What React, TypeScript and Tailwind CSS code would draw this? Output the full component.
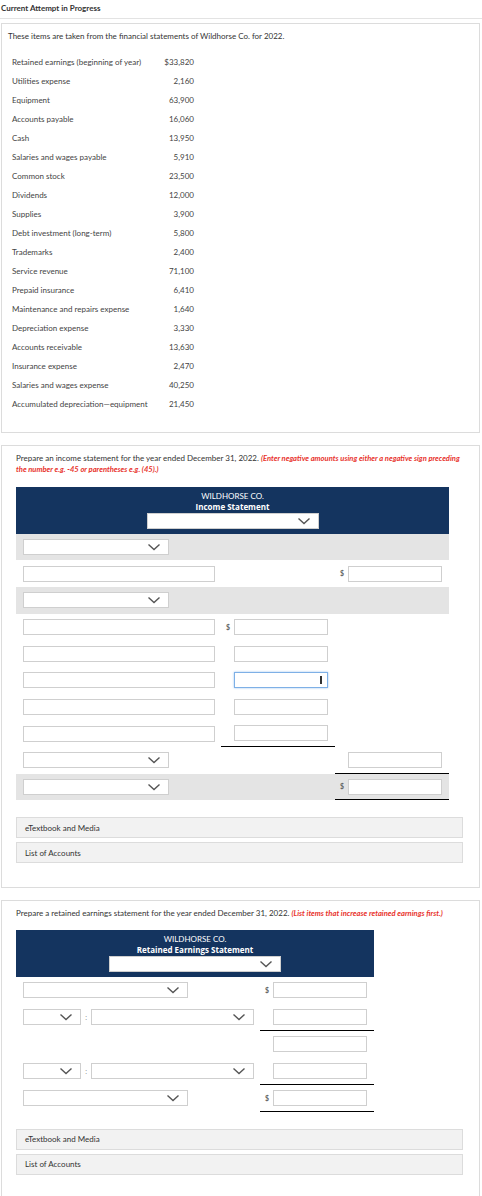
import React from "react";

const items: [string, string][] = [
  ["Retained earnings (beginning of year)", "$33,820"],
  ["Utilities expense", "2,160"],
  ["Equipment", "63,900"],
  ["Accounts payable", "16,060"],
  ["Cash", "13,950"],
  ["Salaries and wages payable", "5,910"],
  ["Common stock", "23,500"],
  ["Dividends", "12,000"],
  ["Supplies", "3,900"],
  ["Debt investment (long-term)", "5,800"],
  ["Trademarks", "2,400"],
  ["Service revenue", "71,100"],
  ["Prepaid insurance", "6,410"],
  ["Maintenance and repairs expense", "1,640"],
  ["Depreciation expense", "3,330"],
  ["Accounts receivable", "13,630"],
  ["Insurance expense", "2,470"],
  ["Salaries and wages expense", "40,250"],
  ["Accumulated depreciation—equipment", "21,450"],
];

const Chevron = () => (
  <svg width="14" height="8" viewBox="0 0 14 8" className="shrink-0">
    <path d="M1.5 1.5l5.5 5 5.5-5" fill="none" stroke="#555" strokeWidth="1.4" />
  </svg>
);

const Select = ({ w }: { w: string }) => (
  <div className={`${w} h-4 bg-white border border-[#cfcfcf] flex items-center justify-end pr-[7px]`}>
    <Chevron />
  </div>
);

const Input = ({ w, focus }: { w: string; focus?: boolean }) => (
  <div
    className={`${w} h-4 bg-white border flex items-center justify-end pr-[5px] ${
      focus ? "border-[#7eb0e6] shadow-[0_0_2px_#9cc3ef]" : "border-[#cfcfcf]"
    }`}
  >
    {focus && <span className="w-[2px] h-[8px] bg-[#333]" />}
  </div>
);

// middle / right amount column
const Amount = ({
  kind,
  line,
  focus,
}: {
  kind?: "input" | "dollar";
  line?: boolean;
  focus?: boolean;
}) => (
  <div className={`w-[114px] h-full flex items-center pl-[5px] ${line ? "border-b border-black" : ""}`}>
    <span className="w-[8px] text-[7px] font-bold text-[#666]">{kind === "dollar" ? "$" : ""}</span>
    {kind && <Input w="w-[94px]" focus={focus} />}
  </div>
);

type Row = {
  gray?: boolean;
  left: "select" | "input";
  mid?: "input" | "dollar";
  midLine?: boolean;
  right?: "input" | "dollar";
  rightLine?: boolean;
  focus?: boolean;
};

const incomeRows: Row[] = [
  { gray: true, left: "select" },
  { left: "input", right: "dollar" },
  { gray: true, left: "select" },
  { left: "input", mid: "dollar" },
  { left: "input", mid: "input" },
  { left: "input", mid: "input", focus: true },
  { left: "input", mid: "input" },
  { left: "input", mid: "input", midLine: true },
  { left: "select", right: "input", rightLine: true },
  { gray: true, left: "select", right: "dollar", rightLine: true },
];

const Header = ({ title }: { title: string }) => (
  <div className="bg-[#14345f] h-[47px] flex flex-col items-center pt-[4px] text-white">
    <div className="text-[8px] leading-[10px]">WILDHORSE CO.</div>
    <div className="text-[8px] leading-[11px] font-bold font-['Open_Sans',sans-serif]">{title}</div>
    <div className="mt-[1px]">
      <Select w="w-[172px]" />
    </div>
  </div>
);

const Buttons = () => (
  <div className="flex flex-col gap-[4px] text-[8px] text-[#333]">
    <div className="h-[21px] bg-[#f2f2f2] border border-[#dcdcdc] flex items-center pl-[8px]">eTextbook and Media</div>
    <div className="h-[21px] bg-[#f2f2f2] border border-[#dcdcdc] flex items-center pl-[8px]">List of Accounts</div>
  </div>
);

const ColonSelects = () => (
  <div className="flex items-center">
    <Select w="w-[58px]" />
    <span className="w-[10px] text-center text-[7px] text-[#888]">:</span>
    <Select w="w-[163px]" />
  </div>
);

export default function App() {
  return (
    <div className="w-[482px] bg-white font-['Lato',sans-serif] text-[#333]">
      <div className="h-[19px] pt-[3px] pl-px text-[8px] leading-[10px] font-bold border-b border-[#e3e3e3]">
        Current Attempt in Progress
      </div>

      <div className="pl-px pt-[4px] pb-10 flex flex-col gap-[12px]">
        {/* data card */}
        <div className="w-[479px] border border-[#dcdcdc] pt-[7px] pb-[18px] pl-[6px]">
          <div className="text-[8px] leading-[10px]">
            These items are taken from the financial statements of Wildhorse Co. for 2022.
          </div>
          <div className="mt-[11.5px] pl-[4px]">
            {items.map(([label, value]) => (
              <div key={label} className="flex h-[19px] items-center text-[8px] text-[#444]">
                <div className="w-[136px]">{label}</div>
                <div className="w-[46px] text-right">{value}</div>
              </div>
            ))}
          </div>
        </div>

        {/* income statement card */}
        <div className="w-[479px] border border-[#dcdcdc] pt-[7.5px] pb-[24px] pl-[14px] pr-[16px]">
          <p className="text-[8px] leading-[11px] w-[450px]">
            Prepare an income statement for the year ended December 31, 2022.{" "}
            <span className="text-[#e8322b] text-[7.6px] font-bold italic">
              (Enter negative amounts using either a negative sign preceding the number e.g. -45 or parentheses e.g. (45).)
            </span>
          </p>
          <div className="mt-[11.5px] w-[433px]">
            <Header title="Income Statement" />
            {incomeRows.map((r, i) => (
              <div key={i} className={`flex h-[26.7px] items-center ${r.gray ? "bg-[#e4e4e4]" : ""}`}>
                <div className="w-[205px] pl-[7px] flex items-center">
                  {r.left === "select" ? <Select w="w-[146px]" /> : <Input w="w-[192px]" />}
                </div>
                <Amount kind={r.mid} line={r.midLine} focus={r.focus} />
                <Amount kind={r.right} line={r.rightLine} />
              </div>
            ))}
          </div>
          <div className="mt-[17px]">
            <Buttons />
          </div>
        </div>

        {/* retained earnings card */}
        <div className="w-[479px] border border-[#dcdcdc] pt-[7px] pb-[24px] pl-[14px] pr-[16px]">
          <p className="text-[8px] leading-[11px]">
            Prepare a retained earnings statement for the year ended December 31, 2022.{" "}
            <span className="text-[#e8322b] text-[7.6px] font-bold italic">(List items that increase retained earnings first.)</span>
          </p>
          <div className="mt-[10.5px] w-[358px]">
            <Header title="Retained Earnings Statement" />
            <div className="flex h-[27px] items-center">
              <div className="w-[244px] pl-[7px]">
                <Select w="w-[165px]" />
              </div>
              <Amount kind="dollar" />
            </div>
            <div className="flex h-[27px] items-center">
              <div className="w-[244px] pl-[7px]">
                <ColonSelects />
              </div>
              <Amount kind="input" line />
            </div>
            <div className="flex h-[27px] items-center">
              <div className="w-[244px]" />
              <Amount kind="input" />
            </div>
            <div className="flex h-[27px] items-center">
              <div className="w-[244px] pl-[7px]">
                <ColonSelects />
              </div>
              <Amount kind="input" line />
            </div>
            <div className="flex h-[27px] items-center">
              <div className="w-[244px] pl-[7px]">
                <Select w="w-[165px]" />
              </div>
              <Amount kind="dollar" line />
            </div>
          </div>
          <div className="mt-[17px]">
            <Buttons />
          </div>
        </div>
      </div>
    </div>
  );
}
